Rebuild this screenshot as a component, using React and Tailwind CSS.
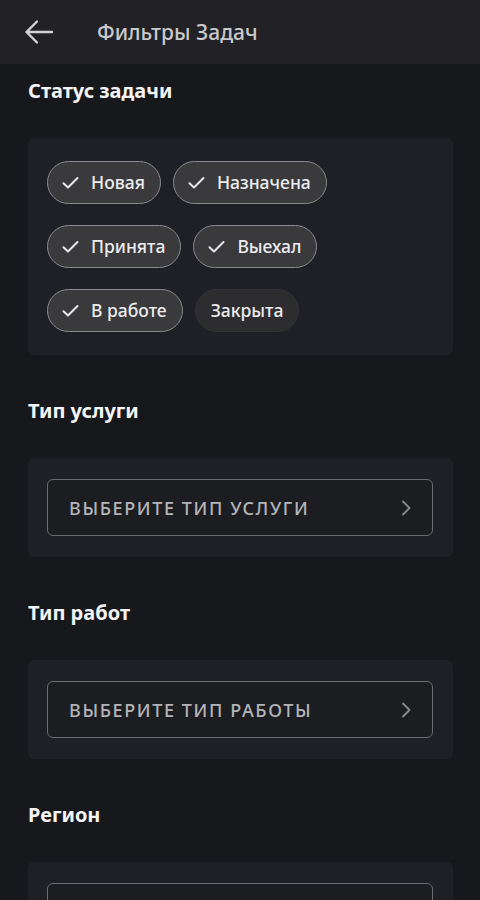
import React from "react";

const font = { fontFamily: '"Noto Sans", "Open Sans", sans-serif' };

function Check() {
  return (
    <svg width="17" height="14" viewBox="0 0 17 14" fill="none" className="shrink-0">
      <path d="M1.5 7.2 L6 11.5 L15.5 2" stroke="#e6e6e8" strokeWidth="2" strokeLinecap="round" strokeLinejoin="round" />
    </svg>
  );
}

function Chip({ label, selected }) {
  if (selected) {
    return (
      <div className="h-[43px] flex items-center gap-[12px] pl-[14px] pr-[15px] rounded-full bg-[#3a3a3d] border-[1.5px] border-[#8a8a8e] text-[17.5px] font-medium text-[#ececee] leading-none">
        <Check />
        <span>{label}</span>
      </div>
    );
  }
  return (
    <div className="h-[43px] flex items-center px-[15px] rounded-full bg-[#2d2d30] border-[1.5px] border-[#333336] text-[17.5px] font-medium text-[#ececee] leading-none">
      <span>{label}</span>
    </div>
  );
}

function Heading({ children, first }) {
  return (
    <div className={(first ? "mt-[14px]" : "mt-[43px]") + " h-[26px] flex items-center text-[20px] font-bold text-[#f4f4f6] leading-none"}>
      {children}
    </div>
  );
}

function SelectCard({ label }) {
  return (
    <div className="mt-[34px] rounded-[6px] bg-[#1f2025] pt-[21px] pb-[21px] pl-[19px] pr-[20px]">
      <div className="h-[57px] rounded-[6px] border-[1.5px] border-[#6c6c70] bg-[#1c1d21] flex items-center justify-between pl-[21px] pr-[20px]">
        <span className="text-[18px] font-medium tracking-[0.09em] text-[#b4b4b8] leading-none">{label}</span>
        <svg width="12" height="18" viewBox="0 0 12 18" fill="none">
          <path d="M3 2.5 L9.5 9 L3 15.5" stroke="#8a8a8e" strokeWidth="1.8" strokeLinecap="round" strokeLinejoin="round" />
        </svg>
      </div>
    </div>
  );
}

export default function App() {
  return (
    <div className="w-[480px] h-[900px] overflow-hidden bg-[#17181c]" style={font}>
      <div className="h-[64px] bg-[#222226] flex items-center">
        <div className="w-[97px] flex items-center pl-[24px]">
          <svg width="30" height="26" viewBox="0 0 30 26" fill="none">
            <path d="M28 13 H3 M13 2.5 L2.5 13 L13 23.5" stroke="#d2d2d4" strokeWidth="2.4" strokeLinecap="round" strokeLinejoin="round" />
          </svg>
        </div>
        <span className="text-[21px] font-medium text-[#c9c9cc] leading-none">Фильтры Задач</span>
      </div>

      <div className="pl-[28px] pr-[27px]">
        <Heading first>Статус задачи</Heading>
        <div className="mt-[34px] rounded-[6px] bg-[#1f2025] pt-[23px] pb-[23px] pl-[19px] pr-[19px] flex flex-col gap-[21px]">
          <div className="flex gap-[12px]">
            <Chip label="Новая" selected />
            <Chip label="Назначена" selected />
          </div>
          <div className="flex gap-[12px]">
            <Chip label="Принята" selected />
            <Chip label="Выехал" selected />
          </div>
          <div className="flex gap-[12px]">
            <Chip label="В работе" selected />
            <Chip label="Закрыта" />
          </div>
        </div>

        <Heading>Тип услуги</Heading>
        <SelectCard label="ВЫБЕРИТЕ ТИП УСЛУГИ" />

        <Heading>Тип работ</Heading>
        <SelectCard label="ВЫБЕРИТЕ ТИП РАБОТЫ" />

        <Heading>Регион</Heading>
        <div className="mt-[34px] rounded-[6px] bg-[#1f2025] pt-[21px] pb-[21px] pl-[19px] pr-[20px]">
          <div className="h-[57px] rounded-[6px] border-[1.5px] border-[#6c6c70] bg-[#1c1d21] flex items-center justify-end pr-[20px]">
            <svg width="12" height="18" viewBox="0 0 12 18" fill="none">
              <path d="M3 2.5 L9.5 9 L3 15.5" stroke="#8a8a8e" strokeWidth="1.8" strokeLinecap="round" strokeLinejoin="round" />
            </svg>
          </div>
        </div>
      </div>
    </div>
  );
}
